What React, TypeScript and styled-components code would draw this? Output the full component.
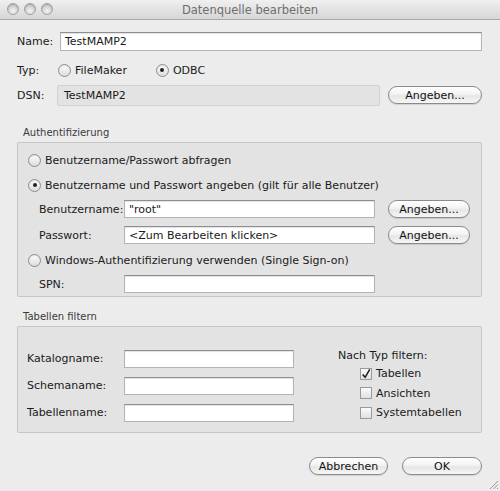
import React from 'react';
import styled, { createGlobalStyle } from 'styled-components';

const GlobalStyle = createGlobalStyle`
    html, body {
        margin: 0;
        padding: 0;
        background: #ececec;
    }
    * {
        box-sizing: border-box;
    }
`;

const Window = styled.div`
    position: relative;
    display: flex;
    flex-direction: column;
    width: 500px;
    height: 491px;
    overflow: hidden;
    background: #ececec;
    font-family: "DejaVu Sans", "Liberation Sans", sans-serif;
    font-size: 11px;
    color: #1a1a1a;
`;

const TitleBar = styled.div`
    position: relative;
    display: flex;
    align-items: center;
    justify-content: center;
    height: 20px;
    background: linear-gradient(to bottom, #f0f0f0, #d6d6d6);
    border-bottom: 1px solid #a9a9a9;
    color: #6e6e6e;
    font-size: 11.5px;
`;

const Lights = styled.div`
    position: absolute;
    left: 7px;
    top: 3px;
    display: flex;
    gap: 5px;
`;

const Light = styled.span`
    width: 12px;
    height: 12px;
    border-radius: 50%;
    border: 1px solid #a2a2a2;
    background: radial-gradient(circle at 50% 70%, #f4f4f4, #c8c8c8 70%);
    box-shadow: inset 0 1px 1px rgba(0, 0, 0, 0.15);
`;

const Body = styled.div`
    display: flex;
    flex-direction: column;
    padding: 0 18px 0 17px;
`;

const Row = styled.div<{ $top: number; $height?: number; $indent?: number }>`
    display: flex;
    align-items: center;
    margin-top: ${p => p.$top}px;
    height: ${p => p.$height ?? 18}px;
    padding-left: ${p => p.$indent ?? 0}px;
`;

const Label = styled.span<{ $width: number }>`
    width: ${p => p.$width}px;
    flex-shrink: 0;
    white-space: nowrap;
`;

const TextField = styled.div<{ $width?: number; $height?: number }>`
    display: flex;
    align-items: center;
    ${p => (p.$width ? `width: ${p.$width}px;` : 'flex: 1;')}
    height: ${p => p.$height ?? 18}px;
    padding: 0 4px;
    background: #fff;
    border: 1px solid #b4b4b4;
    border-top-color: #8e8e8e;
    box-shadow: inset 0 1px 1px rgba(0, 0, 0, 0.12);
    white-space: nowrap;
    overflow: hidden;
`;

const ReadOnlyField = styled.div`
    display: flex;
    align-items: center;
    width: 323px;
    height: 21px;
    padding: 0 6px;
    margin-left: -3px;
    background: #e3e3e3;
    border: 1px solid #d2d2d2;
    border-radius: 2px;
`;

const PushButton = styled.button<{ $width: number; $left?: number }>`
    display: flex;
    align-items: center;
    justify-content: center;
    width: ${p => p.$width}px;
    height: 18px;
    margin-left: ${p => p.$left ?? 0}px;
    padding: 0;
    border: 1px solid #8b8b8b;
    border-radius: 9px;
    background: linear-gradient(to bottom, #ffffff 0%, #f3f3f3 45%, #e6e6e6 55%, #f6f6f6 100%);
    box-shadow: 0 1px 1px rgba(0, 0, 0, 0.12);
    font-family: inherit;
    font-size: 11px;
    color: #111;
`;

const RadioWrap = styled.span<{ $gap?: number }>`
    display: inline-flex;
    align-items: center;
    gap: ${p => p.$gap ?? 4}px;
    white-space: nowrap;
`;

const RadioDot = styled.span<{ $on?: boolean }>`
    position: relative;
    width: 13px;
    height: 13px;
    border-radius: 50%;
    border: 1px solid #8d8d8d;
    background: linear-gradient(to bottom, #fdfdfd, #dcdcdc);
    box-shadow: inset 0 1px 1px rgba(0, 0, 0, 0.1);
    &::after {
        content: '';
        display: ${p => (p.$on ? 'block' : 'none')};
        position: absolute;
        left: 3.5px;
        top: 3.5px;
        width: 4px;
        height: 4px;
        border-radius: 50%;
        background: #222;
    }
`;

const Radio = ({ on, children }: { on?: boolean; children: React.ReactNode }) => (
    <RadioWrap>
        <RadioDot $on={on} />
        {children}
    </RadioWrap>
);

const GroupTitle = styled.div<{ $top: number }>`
    margin-top: ${p => p.$top}px;
    padding-left: 6px;
    height: 12px;
    line-height: 12px;
    font-size: 10px;
    color: #3a3a3a;
`;

const GroupBox = styled.div<{ $height: number }>`
    display: flex;
    flex-direction: column;
    height: ${p => p.$height}px;
    margin-top: 3px;
    padding: 0 0 0 10px;
    background: #e3e3e3;
    border: 1px solid #c6c6c6;
    border-radius: 2px;
`;

const FilterGrid = styled.div`
    display: flex;
    padding-top: 22px;
`;

const FilterFields = styled.div`
    display: grid;
    grid-template-columns: 97px 170px;
    row-gap: 7px;
    align-items: center;
    margin-left: -1px;
`;

const TypeFilter = styled.div`
    display: flex;
    flex-direction: column;
    margin-left: 44px;
    margin-top: 0;
`;

const CheckList = styled.div`
    display: flex;
    flex-direction: column;
    padding-top: 2px;
`;

const CheckRow = styled.div`
    display: flex;
    align-items: center;
    gap: 4px;
    height: 19.5px;
    margin-left: 22px;
`;

const CheckBox = styled.span`
    display: inline-flex;
    align-items: center;
    justify-content: center;
    width: 12px;
    height: 12px;
    border: 1px solid #9a9a9a;
    background: linear-gradient(to bottom, #fbfbfb, #e0e0e0);
`;

const Footer = styled.div`
    display: flex;
    justify-content: flex-end;
    gap: 14px;
    margin-top: 24px;
`;

const Grip = styled.svg`
    position: absolute;
    right: 1px;
    bottom: 1px;
`;

const Check = () => (
    <svg width="12" height="12" viewBox="0 0 12 12">
        <path d="M2 6.5 L5 10 L10.5 0.5" fill="none" stroke="#1a1a1a" strokeWidth="1.8" />
    </svg>
);

export default function App() {
    return (
        <Window>
            <GlobalStyle />
            <TitleBar>
                <Lights>
                    <Light />
                    <Light />
                    <Light />
                </Lights>
                Datenquelle bearbeiten
            </TitleBar>
            <Body>
                <Row $top={12} $height={19}>
                    <Label $width={43}>Name:</Label>
                    <TextField $height={19}>TestMAMP2</TextField>
                </Row>
                <Row $top={10}>
                    <Label $width={41}>Typ:</Label>
                    <Radio>FileMaker</Radio>
                    <span style={{ width: 29 }} />
                    <Radio on>ODBC</Radio>
                </Row>
                <Row $top={5} $height={22}>
                    <Label $width={43}>DSN:</Label>
                    <ReadOnlyField>TestMAMP2</ReadOnlyField>
                    <PushButton $width={94} $left={8}>Angeben...</PushButton>
                </Row>

                <GroupTitle $top={21}>Authentifizierung</GroupTitle>
                <GroupBox $height={155}>
                    <Row $top={8}>
                        <Radio>Benutzername/Passwort abfragen</Radio>
                    </Row>
                    <Row $top={7}>
                        <Radio on>Benutzername und Passwort angeben (gilt für alle Benutzer)</Radio>
                    </Row>
                    <Row $top={6} $indent={11}>
                        <Label $width={85}>Benutzername:</Label>
                        <TextField $width={251}>"root"</TextField>
                        <PushButton $width={82} $left={13}>Angeben...</PushButton>
                    </Row>
                    <Row $top={8} $indent={11}>
                        <Label $width={85}>Passwort:</Label>
                        <TextField $width={251}>&lt;Zum Bearbeiten klicken&gt;</TextField>
                        <PushButton $width={82} $left={13}>Angeben...</PushButton>
                    </Row>
                    <Row $top={7}>
                        <Radio>Windows-Authentifizierung verwenden (Single Sign-on)</Radio>
                    </Row>
                    <Row $top={6} $indent={11}>
                        <Label $width={85}>SPN:</Label>
                        <TextField $width={251} />
                    </Row>
                </GroupBox>

                <GroupTitle $top={14}>Tabellen filtern</GroupTitle>
                <GroupBox $height={107}>
                    <FilterGrid>
                        <FilterFields>
                            <span>Katalogname:</span>
                            <TextField />
                            <span>Schemaname:</span>
                            <TextField />
                            <span>Tabellenname:</span>
                            <TextField />
                        </FilterFields>
                        <TypeFilter>
                            <span>Nach Typ filtern:</span>
                            <CheckList>
                                <CheckRow>
                                    <CheckBox><Check /></CheckBox>
                                    Tabellen
                                </CheckRow>
                                <CheckRow>
                                    <CheckBox />
                                    Ansichten
                                </CheckRow>
                                <CheckRow>
                                    <CheckBox />
                                    Systemtabellen
                                </CheckRow>
                            </CheckList>
                        </TypeFilter>
                    </FilterGrid>
                </GroupBox>

                <Footer>
                    <PushButton $width={79}>Abbrechen</PushButton>
                    <PushButton $width={80}>OK</PushButton>
                </Footer>
            </Body>
            <Grip width="12" height="12" viewBox="0 0 12 12">
                <path d="M11 3 L3 11 M11 6.5 L6.5 11 M11 10 L10 11" stroke="#9a9a9a" strokeWidth="1" />
            </Grip>
        </Window>
    );
}
